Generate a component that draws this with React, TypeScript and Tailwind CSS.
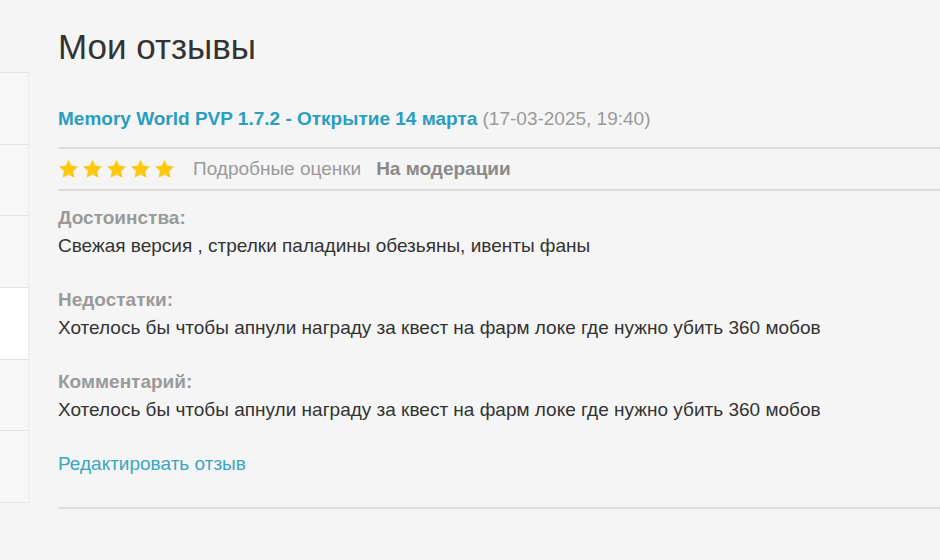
import React from "react";

function Star() {
  return (
    <svg width="21" height="20" viewBox="0 0 24 23" className="block">
      <path
        d="M12 0.8l3.3 7 7.6 0.9-5.6 5.2 1.5 7.6L12 17.8l-6.8 3.7 1.5-7.6L1.1 8.7l7.6-0.9z"
        fill="#fcc80a"
      />
    </svg>
  );
}

export default function App() {
  const items = [0, 1, 2, 3, 4, 5];
  return (
    <div
      className="w-[940px] h-[560px] overflow-hidden bg-[#f5f5f5] flex"
      style={{ fontFamily: '"Liberation Sans", Arial, sans-serif' }}
    >
      <div className="w-[29px] shrink-0 pt-[72px]">
        {items.map((i) => (
          <div
            key={i}
            className={
              "h-[71.7px] border-t border-[#e2e2e2] border-r border-r-[#ececec] " +
              (i === 3 ? "bg-white" : "bg-[#f8f8f8]")
            }
          />
        ))}
        <div className="border-t border-[#e2e2e2]" />
      </div>
      <div className="flex-1 min-w-0 pl-[29px] pt-[27px]">
        <h1 className="text-[35px] leading-[40px] text-[#333] font-normal">Мои отзывы</h1>
        <div className="mt-[40px] text-[19px] leading-[24px] whitespace-nowrap">
          <span className="font-bold text-[#2a9dc0]">
            Memory World PVP 1.7.2 - Открытие 14 марта
          </span>{" "}
          <span className="text-[#9a9a9a]">(17-03-2025, 19:40)</span>
        </div>
        <div className="mt-[16px] border-t-2 border-[#dcdcdc]" />
        <div className="h-[40px] flex items-center text-[19px]">
          <div className="flex gap-[3px]">
            <Star />
            <Star />
            <Star />
            <Star />
            <Star />
          </div>
          <span className="ml-[18px] text-[#9a9a9a]">Подробные оценки</span>
          <span className="ml-[15px] font-bold text-[#8a8a8a]">На модерации</span>
        </div>
        <div className="border-t-2 border-[#dcdcdc]" />
        <div className="pt-[13px] text-[19px] leading-[28px] whitespace-nowrap">
          <div className="font-bold text-[#9a9a9a]">Достоинства:</div>
          <div className="text-[#333]">Свежая версия , стрелки паладины обезьяны, ивенты фаны</div>
          <div className="font-bold text-[#9a9a9a] mt-[26px]">Недостатки:</div>
          <div className="text-[#333]">
            Хотелось бы чтобы апнули награду за квест на фарм локе где нужно убить 360 мобов
          </div>
          <div className="font-bold text-[#9a9a9a] mt-[26px]">Комментарий:</div>
          <div className="text-[#333]">
            Хотелось бы чтобы апнули награду за квест на фарм локе где нужно убить 360 мобов
          </div>
          <div className="mt-[26px] text-[#3aa6c2]">Редактировать отзыв</div>
        </div>
        <div className="mt-[29px] border-t-2 border-[#dedede]" />
      </div>
    </div>
  );
}
